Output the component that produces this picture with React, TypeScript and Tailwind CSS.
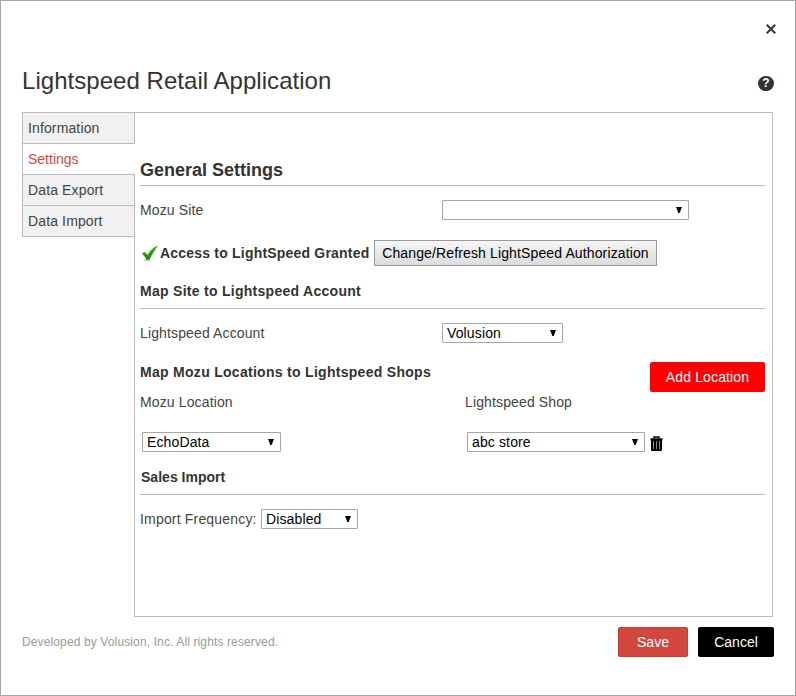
import type { ReactNode } from "react";

const tabs = ["Information", "Settings", "Data Export", "Data Import"];

function SelectBox({ value, className }: { value: string; className: string }) {
  return (
    <div
      className={`flex h-5 shrink-0 items-center justify-between rounded-[1px] border border-[#a6a6a6] bg-white pr-[6px] pl-1 leading-[18px] text-black ${className}`}
    >
      <span>{value}</span>
      <svg width="6" height="6" viewBox="0 0 6 6" className="mb-px">
        <path d="M0 0H6L5 2.5L3.7 6H2.3L1 2.5Z" fill="#000" />
      </svg>
    </div>
  );
}

function SectionTitle({ children, className = "" }: { children: ReactNode; className?: string }) {
  return (
    <h3 className={`mt-[15px] h-7 border-b border-[#bbb] font-bold leading-5 text-[#333] ${className}`}>
      {children}
    </h3>
  );
}

function CheckMark() {
  return (
    <svg width="18" height="17" viewBox="0 0 18 17" className="mt-px shrink-0">
      <defs>
        <linearGradient id="check" x1="0" y1="0" x2="0" y2="1">
          <stop offset="0" stopColor="#3cb51a" />
          <stop offset="1" stopColor="#1d8a09" />
        </linearGradient>
      </defs>
      <ellipse cx="6.5" cy="15.2" rx="3.6" ry="0.9" fill="#ccc" />
      <path d="M0.8 8.6L4 7L6.5 10C8.8 5.8 12.4 1.8 17.2 0.4C14.2 4.2 11.2 9 8.6 14.6L5.4 15C4.4 12.2 2.8 10.2 0.8 8.6Z" fill="url(#check)" />
    </svg>
  );
}

function TrashIcon() {
  return (
    <svg width="13" height="15" viewBox="0 0 13 15" className="mt-1 ml-[5px] shrink-0">
      <path d="M4 2.5V1H9V2.5" fill="none" stroke="#000" strokeWidth="1.4" />
      <path d="M0.5 2.3H12.5V4.4H0.5Z" fill="#000" />
      <path d="M1 4H12V14Q12 15 11 15H2Q1 15 1 14Z" fill="#000" />
      <path d="M3.5 5V13M6.5 5V13M9.5 5V13" stroke="#8a8a8a" strokeWidth="1" />
    </svg>
  );
}

export default function App() {
  return (
    <div className="flex h-[696px] w-[796px] flex-col border border-[#a6a6a6] bg-white font-['Liberation_Sans',Arial,sans-serif] text-sm leading-5 text-[#444]">
      <div className="flex h-14 shrink-0 justify-end pt-[23px] pr-[19px]">
        <svg width="10" height="10" viewBox="0 0 10 10">
          <path d="M0.8 0.8L9.2 9.2M9.2 0.8L0.8 9.2" stroke="#333" strokeWidth="2" />
        </svg>
      </div>
      <header className="flex h-[55px] shrink-0 justify-between pr-[21px] pl-[21px]">
        <h1 className="pt-[8px] text-2xl leading-8 tracking-[0.04px] text-[#333]">Lightspeed Retail Application</h1>
        <div className="mt-[19px] flex h-[15px] w-4 items-center justify-center rounded-full bg-[#333] text-xs font-bold leading-[15px] text-white">
          ?
        </div>
      </header>
      <main className="ml-[21px] flex h-[505px] w-[751px] shrink-0">
        <nav className="z-10 -mr-px w-[113px] shrink-0 self-start border-t border-l border-[#bbb]">
          {tabs.map((tab) => (
            <div
              key={tab}
              className={`h-[31px] border-b border-[#bbb] pl-[5px] leading-[30px] ${
                tab === "Settings" ? "bg-white text-[#d14a43]" : "border-r bg-[#f1f1f1] tracking-[0.13px]"
              }`}
            >
              {tab}
            </div>
          ))}
        </nav>
        <section className="flex-1 border border-[#bbb] pt-[42px] pr-[7px] pl-[5px] tracking-[0.13px]">
          <h2 className="h-[31px] border-b border-[#bbb] text-lg font-bold leading-[30px] tracking-normal text-[#333]">
            General Settings
          </h2>
          <div className="mt-[14px] flex">
            <span className="w-[302px]">Mozu Site</span>
            <SelectBox value="" className="w-[247px]" />
          </div>
          <div className="mt-5 flex h-[26px] items-center">
            <div className="w-5 pl-[1px]">
              <CheckMark />
            </div>
            <span className="w-[214px] font-bold whitespace-nowrap tracking-[0.2px] text-[#333]">
              Access to LightSpeed Granted
            </span>
            <button className="h-[26px] w-[283px] border border-[#999] bg-linear-to-b from-[#f6f6f6] to-[#dcdcdc] text-center whitespace-nowrap text-black">
              Change/Refresh LightSpeed Authorization
            </button>
          </div>
          <SectionTitle className="tracking-[0.28px]">Map Site to Lightspeed Account</SectionTitle>
          <div className="mt-[14px] flex">
            <span className="w-[302px]">Lightspeed Account</span>
            <SelectBox value="Volusion" className="w-[121px]" />
          </div>
          <div className="mt-[19px] flex h-[30px] justify-between">
            <h3 className="font-bold tracking-[0.29px] text-[#333]">Map Mozu Locations to Lightspeed Shops</h3>
            <button className="h-[30px] w-[115px] rounded-[2px] bg-[#f00] text-white">Add Location</button>
          </div>
          <div className="flex">
            <span className="w-[325px]">Mozu Location</span>
            <span>Lightspeed Shop</span>
          </div>
          <div className="mt-5 flex pl-[2px]">
            <div className="w-[325px]">
              <SelectBox value="EchoData" className="w-[139px]" />
            </div>
            <SelectBox value="abc store" className="w-[178px]" />
            <TrashIcon />
          </div>
          <SectionTitle className="pl-px tracking-[0.02px]">Sales Import</SectionTitle>
          <div className="mt-[14px] flex">
            <span className="w-[121px] whitespace-nowrap tracking-[0.18px]">Import Frequency:</span>
            <SelectBox value="Disabled" className="w-[97px]" />
          </div>
        </section>
      </main>
      <footer className="flex pt-[10px] pr-[21px] pl-[21px]">
        <p className="flex-1 text-xs leading-[30px] tracking-[0.125px] text-[#999]">
          Developed by Volusion, Inc. All rights reserved.
        </p>
        <button className="mr-[10px] h-[30px] w-[70px] rounded-[2px] border border-[#c43c35] bg-[#d2473e] text-white">
          Save
        </button>
        <button className="h-[30px] w-[76px] rounded-[2px] bg-black text-white">Cancel</button>
      </footer>
    </div>
  );
}
